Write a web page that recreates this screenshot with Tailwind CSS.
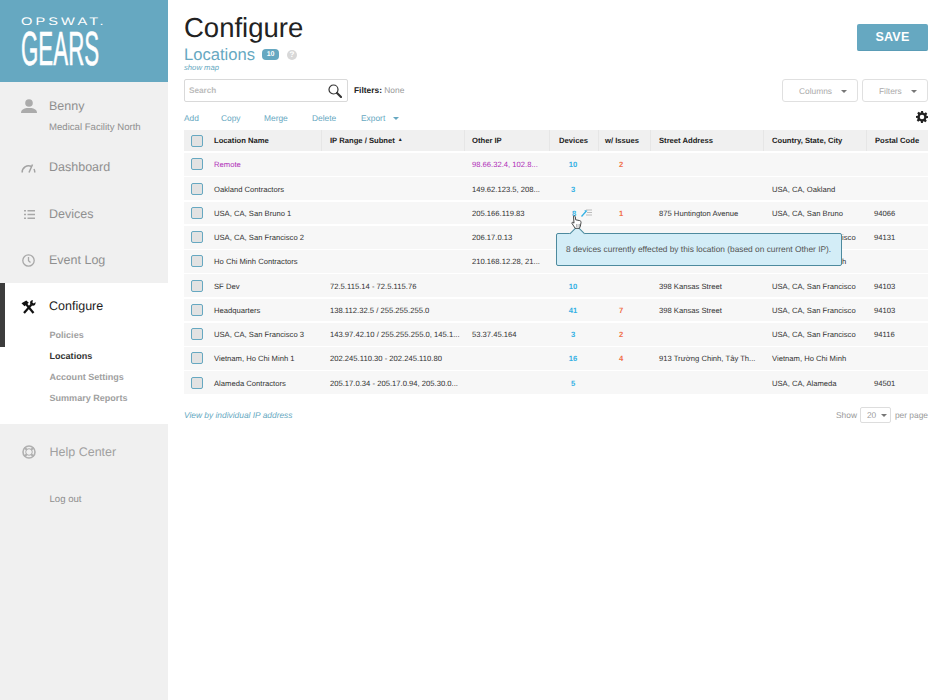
<!DOCTYPE html>
<html lang="en">
<head>
<meta charset="utf-8">
<title>Configure - Locations</title>
<script src="https://cdn.jsdelivr.net/npm/@tailwindcss/browser@4"></script>
</head>
<body class="bg-white font-['Liberation_Sans',Arial,sans-serif] [text-rendering:geometricPrecision]">
<div class="flex w-[950px] h-[700px] overflow-hidden">
  <aside class="w-[168px] shrink-0 bg-[#f0f0f0] flex flex-col text-[#8f8f8f]">
    <div class="h-[82px] bg-[#66a8c1] text-white pl-[21px] pt-[16px] overflow-hidden">
      <div class="h-[12px] text-[11px] leading-[12px] tracking-[2.300px] whitespace-nowrap origin-left scale-x-[1.33]">OPSWAT.</div>
      <div class="h-[44px] text-[48px] leading-[44px] [-webkit-text-stroke:0.6px_white] whitespace-nowrap origin-left scale-x-[0.465]">GEARS</div>
    </div>
    <div class="h-[23px] mt-[12px] pt-[1px] flex items-center text-[12.5px]">
      <svg class="w-[16px] h-[14px] ml-[21px] mr-[12px]" viewBox="0 0 16 14"><circle cx="8" cy="4" r="3.8" fill="#ababab"/><path d="M0 14c0-3.500 3-4.500 5.500-5h5c2.500.5 5.500 1.500 5.500 5z" fill="#ababab"/></svg>
      Benny
    </div>
    <div class="h-[20px] pt-[2px] pl-[49px] flex items-center text-[9.600px] whitespace-nowrap">Medical Facility North</div>
    <div class="h-[46px] mt-[7px] pt-[1px] flex items-center text-[12.5px]">
      <svg class="w-[15px] h-[11px] ml-[21px] mr-[13px]" viewBox="0 0 15 11" fill="none" stroke="#a3a3a3"><path d="M1.200 10.500a6.500 6.500 0 0 1 9-6.200" stroke-width="1.600"/><path d="M8 10.500L11.500 2.500M13.800 10.500a7 7 0 0 0-.8-3.500" stroke-width="1.500"/></svg>
      Dashboard
    </div>
    <div class="h-[47px] pt-[1px] flex items-center text-[12.5px]">
      <svg class="w-[11px] h-[9px] ml-[24px] mr-[14px]" viewBox="0 0 11 9" fill="#a8a8a8"><path d="M0 0h2v1.500H0zM3.500 0H11v1.500H3.500zM0 3.700h2v1.500H0zM3.500 3.700H11v1.500H3.500zM0 7.400h2v1.500H0zM3.500 7.400H11v1.500H3.500z"/></svg>
      Devices
    </div>
    <div class="h-[46px] flex items-center text-[12.5px]">
      <svg class="w-[13px] h-[13px] ml-[22px] mr-[14px]" viewBox="0 0 13 13" fill="none" stroke="#a8a8a8" stroke-width="1.300"><circle cx="6.500" cy="6.500" r="5.700"/><path d="M6.500 3v3.700l2 1.800"/></svg>
      Event Log
    </div>
    <div class="relative bg-white pb-[15px]">
      <div class="absolute left-0 top-0 w-[5px] h-[64px] bg-[#3c3c3c]"></div>
      <div class="h-[42px] pt-[5px] flex items-center text-[12.5px] text-[#1c1c1c]">
        <svg class="w-[15px] h-[14px] ml-[21px] mr-[13px]" viewBox="0 0 15 14" fill="none" stroke="#111"><path d="M5 4l7.500 9" stroke-width="2.200"/><path d="M.5 3.300L5.300.6l2.500 2.200-4.300 3.500z" fill="#111" stroke="none"/><path d="M10.500 4.500L3 13" stroke-width="2.200"/><path d="M14.500 2L12.800 3.600 11.300 2.500l.7-2.100c-2-.4-3.500 1.300-2.700 3.600l2.300 1.800c1.900.3 3.300-1.400 2.900-3.800z" fill="#111" stroke="none"/></svg>
        Configure
      </div>
      <div class="h-[21px] pt-[1px] pl-[49.500px] flex items-center text-[9.050px] font-bold text-[#a0a0a0]">Policies</div>
      <div class="h-[21px] pt-[1px] pl-[49.500px] flex items-center text-[9.050px] font-bold text-[#333]">Locations</div>
      <div class="h-[21px] pt-[1px] pl-[49.500px] flex items-center text-[9.050px] font-bold text-[#a0a0a0]">Account Settings</div>
      <div class="h-[21px] pt-[1px] pl-[49.500px] flex items-center text-[9.050px] font-bold text-[#a0a0a0]">Summary Reports</div>
    </div>
    <div class="h-[55px] pt-[1px] flex items-center text-[12.5px] text-[#a0a0a0]">
      <svg class="w-[14px] h-[14px] ml-[22px] mr-[13.500px]" viewBox="0 0 14 14" fill="none" stroke="#b0b0b0"><circle cx="7" cy="7" r="6" stroke-width="1.600"/><circle cx="7" cy="7" r="3.300" stroke-width="1"/><path d="M2.500 2.500L5 5M11.500 2.500L9 5M2.500 11.500L5 9M11.500 11.500L9 9" stroke-width="2"/></svg>
      Help Center
    </div>
    <div class="h-[40px] pt-[2px] pl-[49.500px] flex items-center text-[9.600px]">Log out</div>
  </aside>

  <main class="w-[760px] pl-[16px] flex flex-col">
    <div class="h-[45px] flex justify-between items-start">
      <h1 class="text-[27.500px] leading-[32px] pt-[12px] text-[#222] h-[45px] font-normal">Configure</h1>
      <button class="w-[71px] h-[27px] mt-[24px] pt-[1px] bg-[#66a8c1] border-b border-[#5a9cb6] rounded-[2px] text-white font-bold text-[12.5px] tracking-[0.2px]">SAVE</button>
    </div>
    <div class="h-[17px] mt-[1px] flex items-center">
      <span class="text-[16.600px] text-[#66a8c1] leading-[17px]">Locations</span>
      <span class="ml-[7px] w-[17px] h-[11px] rounded-[4px] bg-[#66a8c1] text-white text-[7px] font-bold leading-[11px] text-center">10</span>
      <span class="ml-[8px] w-[10px] h-[10px] rounded-full bg-[#d8d8d8] text-white text-[8px] font-bold leading-[10px] text-center">?</span>
    </div>
    <div class="h-[9px] text-[7.700px] italic leading-[9px] text-[#66a8c1]">show map</div>
    <div class="h-[23px] mt-[7px] flex items-center">
      <div class="w-[164px] h-[23px] pt-[1px] border border-[#d9d9d9] rounded-[2px] flex items-center justify-between pl-[4px] pr-[5px] text-[8.200px] font-bold text-[#bbb]">
        Search
        <svg class="w-[14px] h-[14px] -mt-[1px]" viewBox="0 0 14 14" fill="none" stroke="#333"><circle cx="5.500" cy="5.500" r="4.500" stroke-width="1.200"/><path d="M9 9l4 4" stroke-width="2.200" stroke-linecap="round"/></svg>
      </div>
      <div class="ml-[6px] text-[8.400px] text-[#999]"><b class="text-[#222]">Filters:</b> None</div>
      <div class="ml-auto flex gap-[4px] text-[8.400px] text-[#aaa]">
        <div class="w-[76px] h-[23px] pt-[1px] border border-[#e0e0e0] rounded-[3px] flex items-center pl-[16px]">Columns<span class="ml-[9px] border-x-[3px] border-x-transparent border-t-[3px] border-t-[#777]"></span></div>
        <div class="w-[66px] h-[23px] pt-[1px] border border-[#e0e0e0] rounded-[3px] flex items-center pl-[16px]">Filters<span class="ml-[9px] border-x-[3px] border-x-transparent border-t-[3px] border-t-[#777]"></span></div>
      </div>
    </div>
    <div class="h-[28px] flex items-center text-[8.400px] text-[#66a8c1] pt-[5px]">
      <span class="w-[37px]">Add</span><span class="w-[43px]">Copy</span><span class="w-[48px]">Merge</span><span class="w-[49px]">Delete</span><span class="w-[32px]">Export</span>
      <span class="border-x-[3px] border-x-transparent border-t-[3px] border-t-[#66a8c1]"></span>
      <svg class="w-[12px] h-[12px] ml-auto -mt-[4px]" viewBox="0 0 24 24" fill="#222"><path fill-rule="evenodd" d="M10 0h4l.7 3.400 2.100.9 2.900-1.900 2.900 2.900-1.900 2.900.9 2.100L24 10v4l-3.400.7-.9 2.100 1.900 2.900-2.900 2.900-2.900-1.900-2.100.9L14 24h-4l-.7-3.400-2.100-.9-2.900 1.900-2.900-2.900 1.900-2.900-.9-2.100L0 14v-4l3.400-.7.9-2.100-1.900-2.900 2.900-2.900 2.900 1.900 2.100-.9zM12 7.500a4.500 4.500 0 1 0 0 9 4.500 4.500 0 0 0 0-9z"/></svg>
    </div>

    <div class="relative w-[744px] text-[7.650px] text-[#333] whitespace-nowrap">
      <div class="grid grid-cols-[137px_143px_85px_49px_52px_113px_103px_62px] h-[21px] bg-[#f0f0f0] font-bold text-[#222] items-center mb-[2px]">
        <div class="flex items-center h-full"><span class="ml-[7px] mr-[11px] w-[12px] h-[12px] rounded-[2px] border-[1.500px] border-[#66a8c1] bg-[#e2e2e2]"></span>Location Name</div>
        <div class="h-full flex items-center pl-[8px] border-l border-[#e6e6e6]">IP Range / Subnet <span class="ml-[3px] text-[5px]">▲</span></div>
        <div class="h-full flex items-center pl-[7px] border-l border-[#e6e6e6]">Other IP</div>
        <div class="h-full flex items-center pl-[9px] border-l border-[#e6e6e6]">Devices</div>
        <div class="h-full flex items-center pl-[6px] border-l border-[#e6e6e6]">w/ Issues</div>
        <div class="h-full flex items-center pl-[8px] border-l border-[#e6e6e6]">Street Address</div>
        <div class="h-full flex items-center pl-[8px] border-l border-[#e6e6e6]">Country, State, City</div>
        <div class="h-full flex items-center pl-[8px] border-l border-[#e6e6e6]">Postal Code</div>
      </div>
      <div class="flex flex-col gap-[1.500px]">
        <div class="grid grid-cols-[137px_143px_85px_49px_52px_113px_103px_62px] h-[22.750px] pt-[1.500px] bg-[#f7f7f7] items-center text-[#b02fb8]">
          <div class="flex items-center"><span class="ml-[7px] mr-[11px] w-[12px] h-[12px] -mt-[1.500px] rounded-[2px] border-[1.500px] border-[#66a8c1] bg-[#e2e2e2]"></span>Remote</div>
          <div class="pl-[9px]"></div><div class="pl-[8px]">98.66.32.4, 102.8...</div>
          <div class="text-center font-bold text-[#35b1e4] pr-[1px]">10</div><div class="text-center font-bold text-[#f0704a] pr-[6px]">2</div>
          <div></div><div></div><div></div>
        </div>
        <div class="grid grid-cols-[137px_143px_85px_49px_52px_113px_103px_62px] h-[22.750px] pt-[1.500px] bg-[#f7f7f7] items-center">
          <div class="flex items-center"><span class="ml-[7px] mr-[11px] w-[12px] h-[12px] -mt-[1.500px] rounded-[2px] border-[1.500px] border-[#66a8c1] bg-[#e2e2e2]"></span>Oakland Contractors</div>
          <div class="pl-[9px]"></div><div class="pl-[8px]">149.62.123.5, 208...</div>
          <div class="text-center font-bold text-[#35b1e4] pr-[1px]">3</div><div></div>
          <div></div><div class="pl-[9px]">USA, CA, Oakland</div><div></div>
        </div>
        <div class="grid grid-cols-[137px_143px_85px_49px_52px_113px_103px_62px] h-[22.750px] pt-[1.500px] bg-[#f7f7f7] items-center">
          <div class="flex items-center"><span class="ml-[7px] mr-[11px] w-[12px] h-[12px] -mt-[1.500px] rounded-[2px] border-[1.500px] border-[#66a8c1] bg-[#e2e2e2]"></span>USA, CA, San Bruno 1</div>
          <div class="pl-[9px]"></div><div class="pl-[8px]">205.166.119.83</div>
          <div class="flex items-center pl-[23px] font-bold text-[#35b1e4]">8
            <svg class="w-[11px] h-[8px] ml-[5px] -mt-[1px]" viewBox="0 0 11 8" fill="none"><path d="M5 1h6M6 3.500h5M5 6h6" stroke="#bbb"/><path d="M.5 7.500L4.500 3" stroke="#35b1e4" stroke-width="1.300"/><path d="M3.500 1l3 .8-2 2.200z" fill="#35b1e4"/></svg>
          </div>
          <div class="text-center font-bold text-[#f0704a] pr-[6px]">1</div>
          <div class="pl-[9px]">875 Huntington Avenue</div><div class="pl-[9px]">USA, CA, San Bruno</div><div class="pl-[8px]">94066</div>
        </div>
        <div class="grid grid-cols-[137px_143px_85px_49px_52px_113px_103px_62px] h-[22.750px] pt-[1.500px] bg-[#f7f7f7] items-center">
          <div class="flex items-center"><span class="ml-[7px] mr-[11px] w-[12px] h-[12px] -mt-[1.500px] rounded-[2px] border-[1.500px] border-[#66a8c1] bg-[#e2e2e2]"></span>USA, CA, San Francisco 2</div>
          <div class="pl-[9px]"></div><div class="pl-[8px]">206.17.0.13</div>
          <div></div><div></div><div></div><div class="pl-[9px]">USA, CA, San Francisco</div><div class="pl-[8px]">94131</div>
        </div>
        <div class="grid grid-cols-[137px_143px_85px_49px_52px_113px_103px_62px] h-[22.750px] pt-[1.500px] bg-[#f7f7f7] items-center">
          <div class="flex items-center"><span class="ml-[7px] mr-[11px] w-[12px] h-[12px] -mt-[1.500px] rounded-[2px] border-[1.500px] border-[#66a8c1] bg-[#e2e2e2]"></span>Ho Chi Minh Contractors</div>
          <div class="pl-[9px]"></div><div class="pl-[8px]">210.168.12.28, 21...</div>
          <div></div><div></div><div></div><div class="pl-[9px]">Vietnam, Ho Chi Minh</div><div></div>
        </div>
        <div class="grid grid-cols-[137px_143px_85px_49px_52px_113px_103px_62px] h-[22.750px] pt-[1.500px] bg-[#f7f7f7] items-center">
          <div class="flex items-center"><span class="ml-[7px] mr-[11px] w-[12px] h-[12px] -mt-[1.500px] rounded-[2px] border-[1.500px] border-[#66a8c1] bg-[#e2e2e2]"></span>SF Dev</div>
          <div class="pl-[9px]">72.5.115.14 - 72.5.115.76</div><div></div>
          <div class="text-center font-bold text-[#35b1e4] pr-[1px]">10</div><div></div>
          <div class="pl-[9px]">398 Kansas Street</div><div class="pl-[9px]">USA, CA, San Francisco</div><div class="pl-[8px]">94103</div>
        </div>
        <div class="grid grid-cols-[137px_143px_85px_49px_52px_113px_103px_62px] h-[22.750px] pt-[1.500px] bg-[#f7f7f7] items-center">
          <div class="flex items-center"><span class="ml-[7px] mr-[11px] w-[12px] h-[12px] -mt-[1.500px] rounded-[2px] border-[1.500px] border-[#66a8c1] bg-[#e2e2e2]"></span>Headquarters</div>
          <div class="pl-[9px]">138.112.32.5 / 255.255.255.0</div><div></div>
          <div class="text-center font-bold text-[#35b1e4] pr-[1px]">41</div><div class="text-center font-bold text-[#f0704a] pr-[6px]">7</div>
          <div class="pl-[9px]">398 Kansas Street</div><div class="pl-[9px]">USA, CA, San Francisco</div><div class="pl-[8px]">94103</div>
        </div>
        <div class="grid grid-cols-[137px_143px_85px_49px_52px_113px_103px_62px] h-[22.750px] pt-[1.500px] bg-[#f7f7f7] items-center">
          <div class="flex items-center"><span class="ml-[7px] mr-[11px] w-[12px] h-[12px] -mt-[1.500px] rounded-[2px] border-[1.500px] border-[#66a8c1] bg-[#e2e2e2]"></span>USA, CA, San Francisco 3</div>
          <div class="pl-[9px]">143.97.42.10 / 255.255.255.0, 145.1...</div><div class="pl-[8px]">53.37.45.164</div>
          <div class="text-center font-bold text-[#35b1e4] pr-[1px]">3</div><div class="text-center font-bold text-[#f0704a] pr-[6px]">2</div>
          <div></div><div class="pl-[9px]">USA, CA, San Francisco</div><div class="pl-[8px]">94116</div>
        </div>
        <div class="grid grid-cols-[137px_143px_85px_49px_52px_113px_103px_62px] h-[22.750px] pt-[1.500px] bg-[#f7f7f7] items-center">
          <div class="flex items-center"><span class="ml-[7px] mr-[11px] w-[12px] h-[12px] -mt-[1.500px] rounded-[2px] border-[1.500px] border-[#66a8c1] bg-[#e2e2e2]"></span>Vietnam, Ho Chi Minh 1</div>
          <div class="pl-[9px]">202.245.110.30 - 202.245.110.80</div><div></div>
          <div class="text-center font-bold text-[#35b1e4] pr-[1px]">16</div><div class="text-center font-bold text-[#f0704a] pr-[6px]">4</div>
          <div class="pl-[9px]">913 Trường Chinh, Tây Th...</div><div class="pl-[9px]">Vietnam, Ho Chi Minh</div><div></div>
        </div>
        <div class="grid grid-cols-[137px_143px_85px_49px_52px_113px_103px_62px] h-[22.750px] pt-[1.500px] bg-[#f7f7f7] items-center">
          <div class="flex items-center"><span class="ml-[7px] mr-[11px] w-[12px] h-[12px] -mt-[1.500px] rounded-[2px] border-[1.500px] border-[#66a8c1] bg-[#e2e2e2]"></span>Alameda Contractors</div>
          <div class="pl-[9px]">205.17.0.34 - 205.17.0.94, 205.30.0...</div><div></div>
          <div class="text-center font-bold text-[#35b1e4] pr-[1px]">5</div><div></div>
          <div></div><div class="pl-[9px]">USA, CA, Alameda</div><div class="pl-[8px]">94501</div>
        </div>
      </div>

      <div class="absolute left-[372px] top-[103px] w-[286px] h-[33px] bg-[#d3edf7] border border-[#4d8a9e] rounded-[2px] flex items-center pl-[9px] text-[8.350px] text-[#555]">
        8 devices currently effected by this location (based on current Other IP).
        <span class="absolute left-[15px] -top-[6px] w-[10.500px] h-[10.500px] rotate-45 bg-[#d3edf7] border-l border-t border-[#4d8a9e]"></span>
      </div>
      <svg class="absolute left-[387px] top-[85px] w-[11px] h-[14px]" viewBox="0 0 11 14"><path d="M2.500 1.200c.8-.7 1.700-.2 1.800.6l.4 3 4 .8c1 .3 1.500 1 1.300 2l-.6 3.400-1 2.300H4.200L1 8.500c-.5-.8.3-1.500 1.200-1l.8.7z" fill="#fff" stroke="#333" stroke-width=".9"/><path d="M5.500 9v3M7 9v3M8.500 9v3" stroke="#888" stroke-width=".6"/></svg>

      <div class="flex items-center justify-between mt-[13px] h-[16px]">
        <span class="text-[8.400px] italic text-[#66a8c1]">View by individual IP address</span>
        <div class="flex items-center text-[8.400px] text-[#999]">
          Show
          <span class="ml-[3px] mr-[4px] w-[31px] h-[16px] border border-[#ddd] rounded-[2px] flex items-center pl-[6px] text-[#999]">20<span class="ml-[5px] border-x-[3px] border-x-transparent border-t-[3px] border-t-[#777]"></span></span>
          per page
        </div>
      </div>
    </div>
  </main>
</div>
</body>
</html>
